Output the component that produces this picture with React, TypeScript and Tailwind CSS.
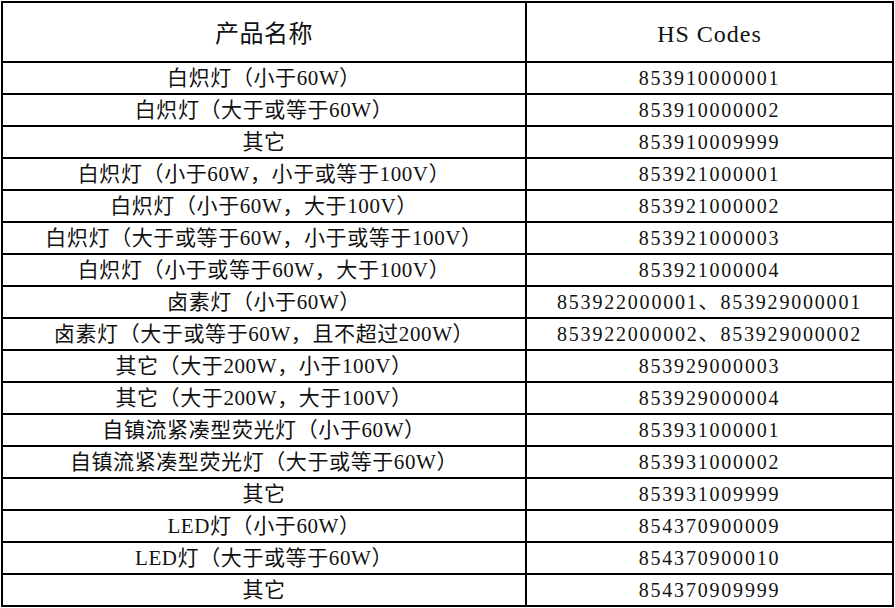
import React from "react";

const rows: [string, string][] = [
  ["白炽灯（小于60W）", "853910000001"],
  ["白炽灯（大于或等于60W）", "853910000002"],
  ["其它", "853910009999"],
  ["白炽灯（小于60W，小于或等于100V）", "853921000001"],
  ["白炽灯（小于60W，大于100V）", "853921000002"],
  ["白炽灯（大于或等于60W，小于或等于100V）", "853921000003"],
  ["白炽灯（小于或等于60W，大于100V）", "853921000004"],
  ["卤素灯（小于60W）", "853922000001、853929000001"],
  ["卤素灯（大于或等于60W，且不超过200W）", "853922000002、853929000002"],
  ["其它（大于200W，小于100V）", "853929000003"],
  ["其它（大于200W，大于100V）", "853929000004"],
  ["自镇流紧凑型荧光灯（小于60W）", "853931000001"],
  ["自镇流紧凑型荧光灯（大于或等于60W）", "853931000002"],
  ["其它", "853931009999"],
  ["LED灯（小于60W）", "854370900009"],
  ["LED灯（大于或等于60W）", "854370900010"],
  ["其它", "854370909999"],
];

const font = { fontFamily: '"Liberation Serif", "Noto Sans CJK SC", serif' };

export default function App() {
  return (
    <div className="bg-white w-[895px] h-[608px] pt-[1px] pl-[1px] text-[#111]" style={font}>
      <div className="w-[893px] border-l-2 border-t-2 border-black flex flex-col">
        <div className="grid grid-cols-[524px_367px] h-[60px]">
          <div className="border-r-2 border-b-2 border-black flex items-center justify-center pt-[4px] text-[24px] tracking-[0.5px]">
            产品名称
          </div>
          <div className="border-r-2 border-b-2 border-black flex items-center justify-center pt-[4px] text-[24px] tracking-[1px]">
            HS Codes
          </div>
        </div>
        {rows.map(([name, code], i) => (
          <div key={i} className="grid grid-cols-[524px_367px] h-[32px]">
            <div className="border-r-2 border-b-2 border-black flex items-center justify-center text-[21px] tracking-[0.6px] leading-none whitespace-nowrap">
              {name}
            </div>
            <div className="border-r-2 border-b-2 border-black flex items-center justify-center text-[20px] tracking-[1.8px] leading-none whitespace-nowrap">
              {code}
            </div>
          </div>
        ))}
      </div>
    </div>
  );
}
